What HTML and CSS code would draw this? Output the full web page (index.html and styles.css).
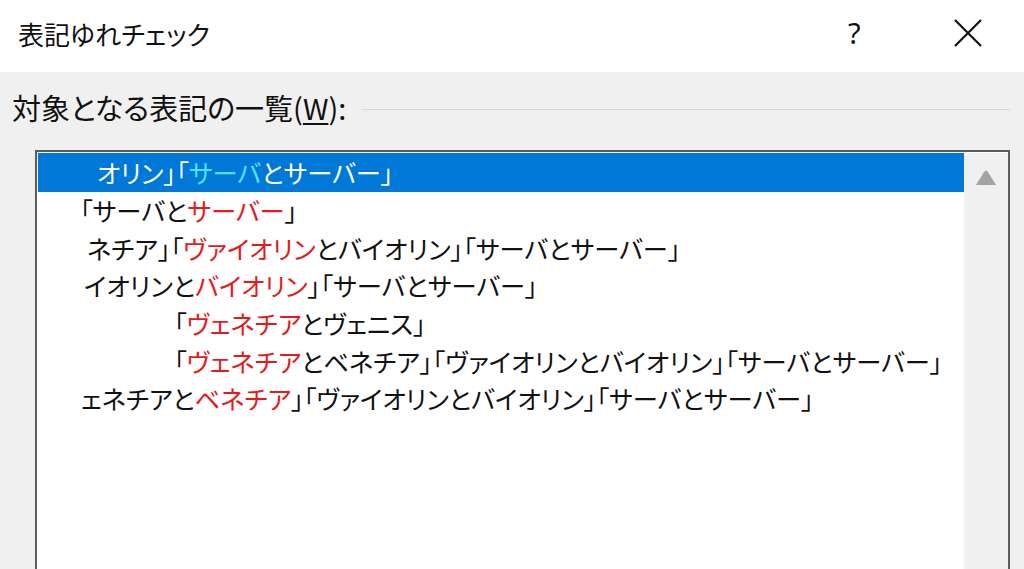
FILE: index.html
```html
<!DOCTYPE html>
<html>
<head>
    <title>表記ゆれチェック</title>
    <link rel="stylesheet" href="styles.css">
</head>
<body>
    <div class="dialog">
        <div class="titlebar">
            <span class="title">表記ゆれチェック</span>
            <span class="help">?</span>
            <span class="close">
                <svg width="30" height="30" viewBox="0 0 30 30">
                    <path d="M2 2 L28 28 M28 2 L2 28" stroke="#111" stroke-width="2.2" fill="none"/>
                </svg>
            </span>
        </div>

        <div class="body">
            <div class="group-label">
                <span>対象となる表記の一覧(<u>W</u>):</span>
                <div class="rule"></div>
            </div>

            <div class="listbox">
                <div class="items">
                    <div class="item selected indent-1">オリン」「<span class="hit">サーバ</span>とサーバー」</div>
                    <div class="item indent-2">「サーバと<span class="mark">サーバー</span>」</div>
                    <div class="item indent-3">ネチア」「<span class="mark">ヴァイオリン</span>とバイオリン」「サーバとサーバー」</div>
                    <div class="item indent-4">イオリンと<span class="mark">バイオリン</span>」「サーバとサーバー」</div>
                    <div class="item indent-5">「<span class="mark">ヴェネチア</span>とヴェニス」</div>
                    <div class="item indent-5">「<span class="mark">ヴェネチア</span>とベネチア」「ヴァイオリンとバイオリン」「サーバとサーバー」</div>
                    <div class="item indent-7">ェネチアと<span class="mark">ベネチア</span>」「ヴァイオリンとバイオリン」「サーバとサーバー」</div>
                </div>
                <div class="scrollbar">
                    <svg class="arrow" width="22" height="16" viewBox="0 0 22 16">
                        <path d="M1 16 L9 3 Q11 0 13 3 L21 16 Z" fill="#a3a3a3"/>
                    </svg>
                </div>
            </div>
        </div>
    </div>
</body>
</html>
```

FILE: styles.css
```css
html, body {
    margin: 0;
    padding: 0;
}

body {
    width: 1024px;
    height: 569px;
    overflow: hidden;
    font-family: "Noto Sans CJK JP", "Noto Sans", sans-serif;
    font-feature-settings: "palt";
    color: #111;
    background-color: #f0f0f0;
}

.titlebar {
    height: 72px;
    background-color: #fff;
    display: flex;
    align-items: center;
    padding-left: 18px;
}

.title {
    font-size: 26px;
    flex: 1;
    margin-top: -6px;
}

.help {
    font-family: "Noto Sans", sans-serif;
    font-size: 29px;
    width: 28px;
    margin-top: -8px;
}

.close {
    display: flex;
    margin-left: 77px;
    margin-right: 41px;
    margin-top: -6px;
}

.body {
    padding: 16px 14px 0 12px;
}

.group-label {
    display: flex;
    align-items: center;
    font-size: 29px;
    height: 38px;
}

.group-label u {
    text-underline-offset: 3px;
}

.rule {
    flex: 1;
    margin-left: 16px;
    margin-top: 4px;
    border-top: 1px solid #d6d6d6;
}

.listbox {
    display: flex;
    margin-top: 24px;
    margin-left: 23px;
    height: 440px;
    border: 2px solid #5c5c5c;
    background-color: #fff;
    padding: 1px 0 0 1px;
}

.items {
    flex: 1;
    overflow: hidden;
}

.item {
    height: 37.7px;
    line-height: 37.7px;
    font-size: 25.3px;
    white-space: nowrap;
}

.item.selected {
    height: 39px;
    line-height: 39px;
    background-color: #0078d7;
    color: #fff;
}

.hit {
    color: #4fe3ff;
}

.mark {
    color: #e31b1b;
}

.indent-1 { padding-left: 59px; }
.indent-2 { padding-left: 42px; }
.indent-3 { padding-left: 49px; }
.indent-4 { padding-left: 46px; }
.indent-5 { padding-left: 136px; }
.indent-7 { padding-left: 43px; }

.scrollbar {
    width: 44px;
    background-color: #f0f0f0;
    display: flex;
    justify-content: center;
    align-items: flex-start;
}

.arrow {
    margin-top: 16px;
}
```
